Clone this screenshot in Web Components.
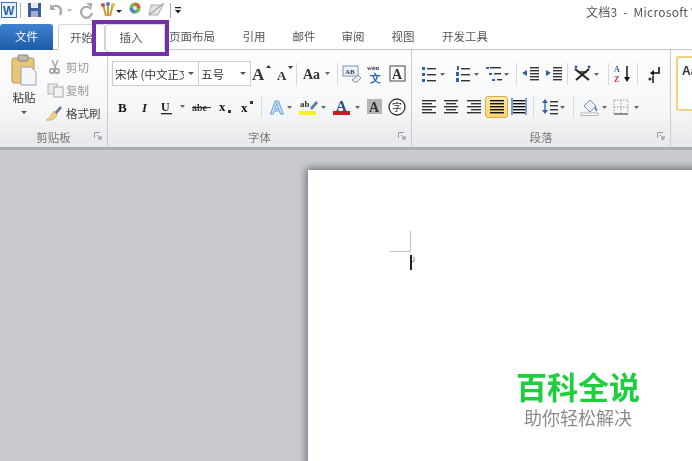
<!DOCTYPE html>
<html lang="zh">
<head>
<meta charset="utf-8">
<title>文档3 - Microsoft Word</title>
<style>
    html, body { margin: 0; height: 100%; overflow: hidden; background: #c9cbd0; }
    body { font-family: "Noto Sans CJK SC", "Liberation Sans", sans-serif; }
</style>
</head>
<body>
<word-app>
    <title-bar slot="title"></title-bar>
    <ribbon-tabs slot="tabs"></ribbon-tabs>
    <word-ribbon slot="ribbon">
        <ribbon-group label="剪贴板" width="108" launcher>
            <clipboard-panel></clipboard-panel>
        </ribbon-group>
        <ribbon-group label="字体" width="304" launcher>
            <tool-row top="1" pad="4">
                <font-combo label="宋体 (中文正文" width="87"></font-combo>
                <font-combo label="五号" width="53"></font-combo>
                <tool-btn icon="growA" w="24"></tool-btn>
                <tool-btn icon="shrinkA" w="21"></tool-btn>
                <tool-sep></tool-sep>
                <tool-btn icon="caseA" w="38"></tool-btn>
                <tool-sep></tool-sep>
                <tool-btn icon="clearFmt" w="26"></tool-btn>
                <tool-btn icon="pinyin" w="22"></tool-btn>
                <tool-btn icon="boxA" w="22"></tool-btn>
            </tool-row>
            <tool-row pad="4">
                <tool-btn icon="bold" w="22"></tool-btn>
                <tool-btn icon="italic" w="22"></tool-btn>
                <tool-btn icon="under" w="22"></tool-btn>
                <tool-btn icon="drop" w="10"></tool-btn>
                <tool-btn icon="strike" w="28"></tool-btn>
                <tool-btn icon="sub" w="20"></tool-btn>
                <tool-btn icon="sup" w="24"></tool-btn>
                <tool-sep></tool-sep>
                <tool-btn icon="effectA" w="36"></tool-btn>
                <tool-btn icon="marker" w="30"></tool-btn>
                <tool-btn icon="colorA" w="37"></tool-btn>
                <tool-btn icon="shadeA" w="18"></tool-btn>
                <tool-btn icon="circleZi" w="26"></tool-btn>
            </tool-row>
        </ribbon-group>
        <ribbon-group label="段落" width="259" launcher>
            <tool-row top="1" pad="4">
                <tool-btn icon="bullets" w="35"></tool-btn>
                <tool-btn icon="numbers" w="34"></tool-btn>
                <tool-btn icon="multi" w="26"></tool-btn>
                <tool-sep style="margin-left:5px"></tool-sep>
                <tool-btn icon="outdent" w="26"></tool-btn>
                <tool-btn icon="indent" w="20"></tool-btn>
                <tool-sep style="margin-left:3px"></tool-sep>
                <tool-btn icon="chinese" w="38"></tool-btn>
                <tool-sep></tool-sep>
                <tool-btn icon="sortAZ" w="26"></tool-btn>
                <tool-sep></tool-sep>
                <tool-btn icon="pilcrow" w="30"></tool-btn>
            </tool-row>
            <tool-row pad="5">
                <tool-btn icon="alignL" w="23"></tool-btn>
                <tool-btn icon="alignC" w="22"></tool-btn>
                <tool-btn icon="alignR" w="23"></tool-btn>
                <tool-btn icon="justify" w="23" active></tool-btn>
                <tool-btn icon="distrib" w="22"></tool-btn>
                <tool-sep style="margin-left:3px"></tool-sep>
                <tool-btn icon="spacing" w="38"></tool-btn>
                <tool-sep style="margin-left:0"></tool-sep>
                <tool-btn icon="fill" w="37"></tool-btn>
                <tool-btn icon="borders" w="28"></tool-btn>
            </tool-row>
        </ribbon-group>
        <style-gallery></style-gallery>
    </word-ribbon>
    <doc-area slot="doc">
        <doc-page></doc-page>
    </doc-area>
    <brand-mark slot="mark"></brand-mark>
</word-app>

<script>
// svg bodies for the little toolbar pictures, all in a 20x20 box unless noted
const dropArrow = (x, y) => `<path d="M${x} ${y}h5l-2.500 3z" fill="#666"/>`;
const lines = (x, ys, w, c = '#333') => ys.map(y => `<rect x="${x}" y="${y}" width="${w}" height="1.400" fill="${c}"/>`).join('');
const txt = (s, x, y, size, fill = '#222', extra = '') =>
    `<text x="${x}" y="${y}" font-size="${size}" fill="${fill}" font-family="Liberation Serif, serif" font-weight="bold" ${extra}>${s}</text>`;

const ICONS = {
    growA: { w: 22, svg: txt('A', 1, 16, 17, '#333') + '<path d="M15 4h5l-2.500-3z" fill="#333"/>' },
    shrinkA: { w: 21, svg: txt('A', 3, 16, 13, '#333') + '<path d="M14 2h5l-2.500 3z" fill="#333"/>' },
    caseA: { w: 36, svg: txt('Aa', 4, 15, 14, '#333') + dropArrow(26, 8) },
    clearFmt: { w: 22, svg: '<rect x="2" y="2" width="15" height="10" fill="#eef3fa" stroke="#7f95b5"/>' + txt('AB', 4, 10, 7, '#345') + '<path d="M11 16l6-5 3 3-4 4h-3z" fill="#e9e9ee" stroke="#8a8f98"/>' },
    pinyin: { w: 22, svg: txt('wén', 2, 6, 7, '#335') + txt('文', 5, 18, 11, '#2f62a8') },
    boxA: { w: 20, svg: '<rect x="2" y="2" width="15" height="15" fill="#fff" stroke="#444"/>' + txt('A', 4, 15, 14, '#333') },
    bold: { w: 16, svg: txt('B', 3, 15, 13, '#111') },
    italic: { w: 16, svg: txt('I', 5, 15, 13, '#222', 'font-style="italic"') },
    under: { w: 16, svg: txt('U', 2, 14, 12, '#222') + '<rect x="2" y="16" width="11" height="1.300" fill="#222"/>' },
    drop: { w: 8, svg: dropArrow(1, 8) },
    strike: { w: 22, svg: txt('abe', 1, 14, 10, '#333') + '<rect x="1" y="10" width="19" height="1" fill="#333"/>' },
    sub: { w: 18, svg: txt('x', 2, 14, 13, '#111') + '<rect x="11" y="13" width="3" height="3" fill="#333"/>' },
    sup: { w: 18, svg: txt('x', 2, 15, 13, '#111') + '<rect x="11" y="4" width="3" height="3" fill="#333"/>' },
    effectA: { w: 30, svg: '<text x="4" y="17" font-size="19" font-weight="bold" fill="#cfe4f7" stroke="#6ba6dc" stroke-width="1" font-family="Liberation Sans, sans-serif">A</text>' + dropArrow(21, 9) },
    marker: { w: 30, svg: txt('ab', 1, 10, 9, '#333') + '<path d="M11 11l6-7 2 2-6 7z" fill="#5c79a8"/><rect x="0" y="14" width="17" height="4" fill="#f7f21c"/>' + dropArrow(22, 9) },
    colorA: { w: 30, svg: txt('A', 3, 14, 15, '#2f4d86') + '<rect x="0" y="14" width="17" height="4" fill="#d01622"/>' + dropArrow(22, 9) },
    shadeA: { w: 18, svg: '<rect x="1" y="2" width="15" height="15" fill="#b5b5b5"/>' + txt('A', 3, 15, 14, '#333') },
    circleZi: { w: 20, svg: '<circle cx="10" cy="10" r="8" fill="#fff" stroke="#333" stroke-width="1.300"/><text x="5" y="14" font-size="10" fill="#333" font-family="Noto Sans CJK SC, sans-serif">字</text>' },
    bullets: { w: 26, svg: '<rect x="1" y="3" width="3" height="3" fill="#2f62a8"/><rect x="1" y="9" width="3" height="3" fill="#2f62a8"/><rect x="1" y="15" width="3" height="3" fill="#2f62a8"/>' + lines(6, [4, 10, 16], 9) + dropArrow(19, 9) },
    numbers: { w: 26, svg: '<rect x="2" y="2" width="2" height="4" fill="#2f62a8"/><rect x="1" y="8" width="3" height="4" fill="#2f62a8"/><rect x="1" y="14" width="3" height="4" fill="#2f62a8"/>' + lines(6, [4, 10, 16], 9) + dropArrow(19, 9) },
    multi: { w: 26, svg: '<rect x="1" y="3" width="3" height="2" fill="#2f62a8"/><rect x="4" y="9" width="3" height="2" fill="#2f62a8"/><rect x="7" y="15" width="3" height="2" fill="#2f62a8"/>' + lines(5, [3], 11) + lines(9, [9], 7) + lines(12, [15], 5) + dropArrow(19, 9) },
    outdent: { w: 20, svg: lines(9, [3, 6, 9, 12, 15], 9) + '<path d="M1 9l5-3v6z" fill="#2f62a8"/>' },
    indent: { w: 20, svg: lines(9, [3, 6, 9, 12, 15], 9) + '<path d="M7 9l-5-3v6z" fill="#2f62a8"/>' },
    chinese: { w: 30, svg: '<path d="M2 5l14 11M16 5L3 16" stroke="#222" stroke-width="2"/><path d="M5 8h9" stroke="#222" stroke-width="1.500"/><circle cx="3" cy="3" r="1.400" fill="#2f62a8"/><circle cx="16" cy="3" r="1.400" fill="#2f62a8"/>' + dropArrow(21, 9) },
    sortAZ: { w: 20, svg: txt('A', 1, 8, 8, '#2f62a8') + txt('Z', 1, 18, 8, '#b33') + '<path d="M14 2v14" stroke="#111" stroke-width="1.500"/><path d="M11 13l3 5 3-5z" fill="#111"/>' },
    pilcrow: { w: 18, svg: '<path d="M14 3v6H7" stroke="#111" stroke-width="1.600" fill="none"/><path d="M9 6l-4 3 4 3z" fill="#111"/><circle cx="5" cy="15" r="1.600" fill="#333"/><path d="M8 12v7" stroke="#111" stroke-width="1.500"/>' },
    alignL: { w: 18, svg: lines(2, [3, 9, 15], 14) + lines(2, [6, 12], 10) },
    alignC: { w: 18, svg: lines(2, [3, 9, 15], 14) + lines(4, [6, 12], 10) },
    alignR: { w: 18, svg: lines(2, [3, 9, 15], 14) + lines(6, [6, 12], 10) },
    justify: { w: 18, svg: lines(2, [3, 6, 9, 12, 15], 14, '#111') },
    distrib: { w: 18, svg: lines(3, [3, 6, 9, 12, 15], 12, '#111') + '<path d="M2 1v17M16 1v17" stroke="#2f62a8" stroke-width="1.200"/>' },
    spacing: { w: 26, svg: '<path d="M4 3v13" stroke="#2f62a8" stroke-width="1.300"/><path d="M1 6l3-4 3 4zM1 13l3 4 3-4z" fill="#2f62a8"/>' + lines(9, [4, 8, 12, 16], 8) + dropArrow(19, 9) },
    fill: { w: 28, svg: '<path d="M4 9l6-6 6 6-6 6z" fill="#eef1f6" stroke="#7a8aa5"/><path d="M15 9c2 2 3 4 2 5s-3-1-2-5z" fill="#4b8fd6"/><rect x="1" y="16" width="17" height="2.400" fill="#fff" stroke="#888" stroke-width=".6"/>' + dropArrow(22, 9) },
    borders: { w: 28, svg: '<rect x="2" y="3" width="14" height="14" fill="none" stroke="#999" stroke-dasharray="1.500 1.500"/><path d="M9 3v14M2 10h14" stroke="#999" stroke-dasharray="1.500 1.500"/><path d="M2 17h14" stroke="#444"/>' + dropArrow(22, 9) }
};

class WordApp extends HTMLElement {
    constructor() {
        super();
        this.attachShadow({ mode: 'open' });
        // the source shot is a soft jpeg, a very light blur brings the edges closer to it
        this.shadowRoot.innerHTML = `
            <style>
                :host { display: flex; flex-direction: column; position: relative; width: 692px; height: 461px; overflow: hidden; filter: blur(.35px); }
            </style>
            <slot name="title"></slot>
            <slot name="tabs"></slot>
            <slot name="ribbon"></slot>
            <slot name="doc"></slot>
            <slot name="mark"></slot>
        `;
    }
}

class TitleBar extends HTMLElement {
    constructor() {
        super();
        this.attachShadow({ mode: 'open' });
        this.shadowRoot.innerHTML = `
            <style>
                :host { display: flex; align-items: center; height: 23px; background: #fff; overflow: hidden; flex: none; }
                svg { display: block; flex: none; }
                .title { flex: none; margin-left: 400px; white-space: nowrap; font-size: 12px; color: #555; letter-spacing: .25px; }
            </style>
            <svg width="186" height="23" viewBox="0 0 186 23">
                <rect x="1.500" y="2.500" width="15" height="15" fill="#e8f0fa" stroke="#3f6fb0"/>
                <text x="3" y="15" font-size="12" font-weight="bold" fill="#1f5fb0" font-family="Liberation Sans, sans-serif">W</text>
                <path d="M20.500 3v15" stroke="#aab"/>
                <rect x="28" y="3" width="13" height="14" fill="#3d5c9c"/>
                <rect x="31" y="3" width="7" height="5" fill="#e5e9f2"/>
                <rect x="31" y="11" width="7" height="6" fill="#a4aecb"/>
                <path d="M52 7c6-3 11 1 8 8" stroke="#a9a9a9" stroke-width="2.400" fill="none"/>
                <path d="M50 4v6h6z" fill="#a9a9a9"/>
                <path d="M67 9h5l-2.500 3z" fill="#bbb"/>
                <path d="M91 9a5.500 5.500 0 1 0 1 4" stroke="#aaa" stroke-width="2.200" fill="none"/>
                <path d="M86 3h6v5z" fill="#aaa"/>
                <path d="M103 4l3 12M108 3v13M113 4l-3 12" stroke="#c99a3a" stroke-width="2"/>
                <circle cx="103" cy="5" r="2" fill="#d54b4b"/><circle cx="108" cy="4" r="2" fill="#4a7fc9"/><circle cx="113" cy="5" r="2" fill="#e6b93a"/>
                <path d="M116 10h6l-3 3z" fill="#222"/>
                <circle cx="135" cy="8" r="5.500" fill="#6dbb55"/>
                <path d="M135 8V2.500a5.500 5.500 0 0 1 5.500 5.500z" fill="#e25b3c"/>
                <path d="M135 8h-5.500a5.500 5.500 0 0 0 5.500 5.500z" fill="#4a82c9"/>
                <circle cx="135" cy="8" r="2" fill="#eee"/>
                <path d="M151 5h12l-5 10h-9z" fill="#e3e3e3" stroke="#aaa"/>
                <path d="M149 15l15-12" stroke="#888"/>
                <path d="M170.500 3v15" stroke="#aaa"/>
                <rect x="175" y="7" width="6" height="1.300" fill="#222"/>
                <path d="M175 10h6l-3 3.500z" fill="#222"/>
            </svg>
            <div class="title">文档3 &nbsp;-&nbsp; Microsoft Word</div>
        `;
    }
}

class RibbonTabs extends HTMLElement {
    constructor() {
        super();
        this.attachShadow({ mode: 'open' });
        // [label, width] for each tab, the widths keep the labels where Word has them
        const tabs = [['页面布局', 54], ['引用', 50, 10], ['邮件', 50], ['审阅', 48], ['视图', 52], ['开发工具', 72]];
        this.shadowRoot.innerHTML = `
            <style>
                :host { display: flex; align-items: flex-end; position: relative; height: 27px; flex: none; background: #fff; font-size: 11.500px; color: #555; }
                :host::after { content: ""; position: absolute; left: 0; right: 0; bottom: 0; height: 1px; background: #c3c6ca; }
                .file { width: 53px; height: 26px; padding-bottom: 2px; box-sizing: border-box; display: flex; align-items: center; justify-content: center; color: #fff; border-radius: 3px 3px 0 0; background: linear-gradient(#3f82cf, #1d5ba6); margin-right: 5px; position: relative; z-index: 1; }
                .tab { height: 26px; padding-bottom: 2px; display: flex; align-items: center; justify-content: center; box-sizing: border-box; flex: none; }
                .on { background: #fff; border: 1px solid #d2d4d7; border-bottom: 0; border-radius: 3px 3px 0 0; position: relative; z-index: 1; }
                .ring { position: absolute; left: 92px; top: -3px; width: 77px; height: 36px; box-sizing: border-box; border: 4px solid #7530a8; z-index: 3; }
            </style>
            <div class="file">文件</div>
            <div class="tab on" style="width:47px">开始</div>
            <div class="tab on" style="width:60px;padding-right:8px">插入</div>
            ${tabs.map(([label, w, gap]) => `<div class="tab" style="width:${w}px;margin-left:${gap || 0}px">${label}</div>`).join('')}
            <div class="ring"></div>
        `;
    }
}

class WordRibbon extends HTMLElement {
    constructor() {
        super();
        this.attachShadow({ mode: 'open' });
        this.shadowRoot.innerHTML = `
            <style>
                :host { display: flex; height: 100px; flex: none; box-sizing: border-box; overflow: hidden; background: linear-gradient(#fdfdfe, #f6f7f8 60%, #e6e8eb); border-bottom: 3px solid #a9acb0; }
            </style>
            <slot></slot>
        `;
    }
}

class RibbonGroup extends HTMLElement {
    constructor() {
        super();
        this.attachShadow({ mode: 'open' });
        const launcher = this.hasAttribute('launcher') ? '<svg class="launch" width="8" height="8" viewBox="0 0 8 8"><path d="M.5 6V.5H6" fill="none" stroke="#999"/><path d="M3 3l4 4M7 4v3H4" fill="none" stroke="#888"/></svg>' : '';
        this.shadowRoot.innerHTML = `
            <style>
                :host { display: flex; flex-direction: column; flex: none; box-sizing: border-box; width: ${this.getAttribute('width')}px; border-right: 1px solid #c9ccd0; position: relative; }
                .body { flex: 1; min-height: 0; }
                .foot { height: 21px; display: flex; align-items: center; justify-content: center; font-size: 11.500px; color: #777; flex: none; padding-top: 1px; box-sizing: border-box; }
                .launch { position: absolute; right: 5px; bottom: 7px; }
            </style>
            <div class="body"><slot></slot></div>
            <div class="foot">${this.getAttribute('label')}</div>
            ${launcher}
        `;
    }
}

class ToolRow extends HTMLElement {
    constructor() {
        super();
        this.attachShadow({ mode: 'open' });
        const top = this.hasAttribute('top');
        this.shadowRoot.innerHTML = `
            <style>
                :host { display: flex; align-items: center; height: ${top ? 37 : 24}px; box-sizing: border-box; padding-left: ${this.getAttribute('pad') || 0}px; padding-top: ${top ? 10 : 0}px; margin-bottom: ${top ? 8 : 0}px; }
            </style>
            <slot></slot>
        `;
    }
}

class ToolBtn extends HTMLElement {
    constructor() {
        super();
        this.attachShadow({ mode: 'open' });
    }

    connectedCallback() {
        const icon = ICONS[this.getAttribute('icon')];
        const w = this.getAttribute('w');
        const active = this.hasAttribute('active');
        this.shadowRoot.innerHTML = `
            <style>
                :host { display: flex; align-items: center; justify-content: center; flex: none; width: ${w}px; height: 22px; box-sizing: border-box;
                    ${active ? 'background: linear-gradient(#fde9a8, #fbd46c); border: 1px solid #d9ab4c; border-radius: 3px;' : ''} }
                svg { display: block; }
            </style>
            <svg width="${icon.w}" height="20" viewBox="0 0 ${icon.w} 20">${icon.svg}</svg>
        `;
    }
}

class ToolSep extends HTMLElement {
    constructor() {
        super();
        this.attachShadow({ mode: 'open' });
        this.shadowRoot.innerHTML = `
            <style>
                :host { display: block; flex: none; width: 1px; height: 22px; background: #d6d8db; margin: 0 1px; }
            </style>
        `;
    }
}

class FontCombo extends HTMLElement {
    constructor() {
        super();
        this.attachShadow({ mode: 'open' });
        this.shadowRoot.innerHTML = `
            <style>
                :host { display: flex; align-items: center; flex: none; width: ${this.getAttribute('width')}px; height: 25px; box-sizing: border-box; background: #fff; border: 1px solid #c9ccd0; margin-right: -1px; font-size: 11.500px; color: #333; padding-left: 2px; }
                span { flex: 1; min-width: 0; overflow: hidden; white-space: nowrap; }
                i { flex: none; width: 0; height: 0; margin: 0 4px; border: 3px solid transparent; border-top: 3px solid #555; border-bottom: 0; }
            </style>
            <span>${this.getAttribute('label')}</span><i></i>
        `;
    }
}

class ClipboardPanel extends HTMLElement {
    constructor() {
        super();
        this.attachShadow({ mode: 'open' });
        this.shadowRoot.innerHTML = `
            <style>
                :host { display: flex; height: 76px; padding-left: 8px; box-sizing: border-box; font-size: 11.500px; }
                .paste { width: 32px; display: flex; flex-direction: column; align-items: center; color: #333; flex: none; }
                .paste svg { margin-top: 4px; display: block; }
                .paste span { margin-top: 3px; line-height: 16px; }
                .paste i { margin-top: 6px; border: 3px solid transparent; border-top: 3px solid #555; border-bottom: 0; }
                .list { margin-left: 7px; padding-top: 6px; display: flex; flex-direction: column; gap: 2px; }
                .item { display: flex; align-items: center; gap: 3px; height: 21px; color: #999; white-space: nowrap; }
                .item.on { color: #444; }
                svg { flex: none; }
            </style>
            <div class="paste">
                <svg width="26" height="32" viewBox="0 0 26 32">
                    <rect x="1" y="4" width="22" height="25" rx="2" fill="#e8c679" stroke="#b8945a"/>
                    <rect x="7" y="1" width="10" height="6" rx="1" fill="#bdb9ad" stroke="#8a8679"/>
                    <path d="M10 13h10l5 5v13H10z" fill="#f4f6fa" stroke="#9aa3b2"/>
                </svg>
                <span>粘贴</span>
                <i></i>
            </div>
            <div class="list">
                <div class="item"><svg width="16" height="16" viewBox="0 0 16 16"><path d="M5 1l4 9M11 1L7 10" stroke="#aaa" stroke-width="1.600"/><circle cx="5" cy="12" r="2.200" fill="none" stroke="#999" stroke-width="1.500"/><circle cx="10" cy="12" r="2.200" fill="none" stroke="#999" stroke-width="1.500"/></svg>剪切</div>
                <div class="item"><svg width="18" height="16" viewBox="0 0 18 16"><rect x="1" y="2" width="9" height="10" fill="#e8e8e8" stroke="#b3b3b3"/><rect x="7" y="5" width="9" height="10" fill="#f3f3f3" stroke="#aaa"/></svg><span style="margin-left:-2px">复制</span></div>
                <div class="item on" style="margin-left:-2px"><svg width="18" height="18" viewBox="0 0 18 18"><path d="M9 9l6-7 2 2-6 7z" fill="#6d7fa5"/><path d="M9 7l3 4c-2 4-6 6-11 5 3-1 5-5 8-9z" fill="#ecd27a" stroke="#b9974a" stroke-width=".6"/></svg>格式刷</div>
            </div>
        `;
    }
}

class StyleGallery extends HTMLElement {
    constructor() {
        super();
        this.attachShadow({ mode: 'open' });
        this.shadowRoot.innerHTML = `
            <style>
                :host { display: block; flex: 1; padding: 6px 0 0 5px; }
                div { height: 55px; box-sizing: border-box; background: #fff; border: 2px solid #f3d27a; border-right: 0; border-radius: 3px 0 0 3px; padding: 6px 0 0 4px; font: bold 12px "Liberation Sans", sans-serif; color: #333; overflow: hidden; }
            </style>
            <div>Aa</div>
        `;
    }
}

class DocArea extends HTMLElement {
    constructor() {
        super();
        this.attachShadow({ mode: 'open' });
        this.shadowRoot.innerHTML = `
            <style>
                :host { display: block; flex: 1; min-height: 0; overflow: hidden; background: #c9cbd0; padding: 20px 0 0 308px; box-sizing: border-box; }
            </style>
            <slot></slot>
        `;
    }
}

class DocPage extends HTMLElement {
    constructor() {
        super();
        this.attachShadow({ mode: 'open' });
        this.shadowRoot.innerHTML = `
            <style>
                :host { display: block; width: 500px; height: 600px; background: #fff; box-shadow: -2px -2px 8px #6f7277; padding: 61px 0 0 82px; box-sizing: border-box; }
                svg { display: block; }
            </style>
            <svg width="30" height="40" viewBox="0 0 30 40">
                <path d="M0 20.500h20.500V0" fill="none" stroke="#c4c4c4" stroke-width="1.200"/>
                <rect x="20" y="24" width="2" height="15" fill="#222"/>
                <path d="M23 26c2 1 2 4-1 5" fill="none" stroke="#777"/>
            </svg>
        `;
    }
}

class BrandMark extends HTMLElement {
    constructor() {
        super();
        this.attachShadow({ mode: 'open' });
        this.shadowRoot.innerHTML = `
            <style>
                :host { position: absolute; left: 516px; top: 366px; display: flex; flex-direction: column; align-items: center; width: 124px; }
                b { font-size: 31px; line-height: 39px; color: #1fce3f; font-weight: 700; white-space: nowrap; }
                span { font-size: 18px; line-height: 24px; color: #8b8b8b; white-space: nowrap; }
            </style>
            <b>百科全说</b>
            <span>助你轻松解决</span>
        `;
    }
}

customElements.define('word-app', WordApp);
customElements.define('title-bar', TitleBar);
customElements.define('ribbon-tabs', RibbonTabs);
customElements.define('word-ribbon', WordRibbon);
customElements.define('ribbon-group', RibbonGroup);
customElements.define('tool-row', ToolRow);
customElements.define('tool-btn', ToolBtn);
customElements.define('tool-sep', ToolSep);
customElements.define('font-combo', FontCombo);
customElements.define('clipboard-panel', ClipboardPanel);
customElements.define('style-gallery', StyleGallery);
customElements.define('doc-area', DocArea);
customElements.define('doc-page', DocPage);
customElements.define('brand-mark', BrandMark);
</script>
</body>
</html>
